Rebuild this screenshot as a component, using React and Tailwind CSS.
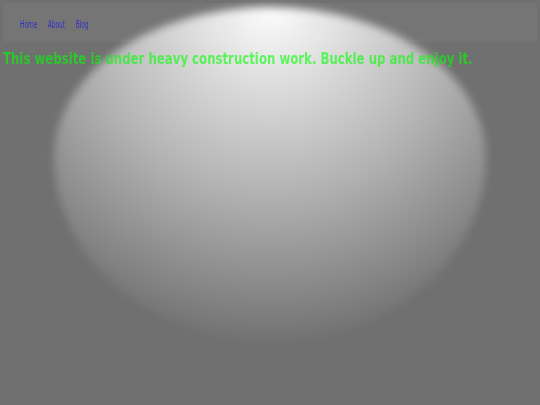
export default function App() {
  return (
    <div className="relative w-[540px] h-[405px] overflow-hidden bg-[#707070]" style={{ fontFamily: '"DejaVu Sans", sans-serif' }}>
      <div
        className="pointer-events-none absolute left-[54px] top-[7px] w-[432px] h-[334px] rounded-[50%_50%_50%_50%/45%_45%_55%_55%] blur-[4px] bg-[radial-gradient(circle_at_50%_0%,#fdfdfd_0px,#dadada_85px,#b3b3b3_185px,#8c8c8c_275px,#747474_330px)]"
      />
      <div className="relative p-[3px]">
        <nav className="h-[39px] rounded-[3px] bg-white/[0.04] flex items-center pl-[17px] pt-[4px]">
          <div className="flex items-center gap-[18px] scale-x-[0.585] origin-left">
            <a className="text-[10px] text-[#0000ff]/60" href="#">Home</a>
            <a className="text-[10px] text-[#0000ff]/60" href="#">About</a>
            <a className="text-[10px] text-[#0000ff]/60" href="#">Blog</a>
          </div>
        </nav>
        <h1 className="mt-[8px] text-[15px] font-bold text-[#00ff00]/60 leading-[18px] whitespace-nowrap scale-x-[0.783] origin-left">
          This website is under heavy construction work. Buckle up and enjoy it.
        </h1>
      </div>
    </div>
  );
}
